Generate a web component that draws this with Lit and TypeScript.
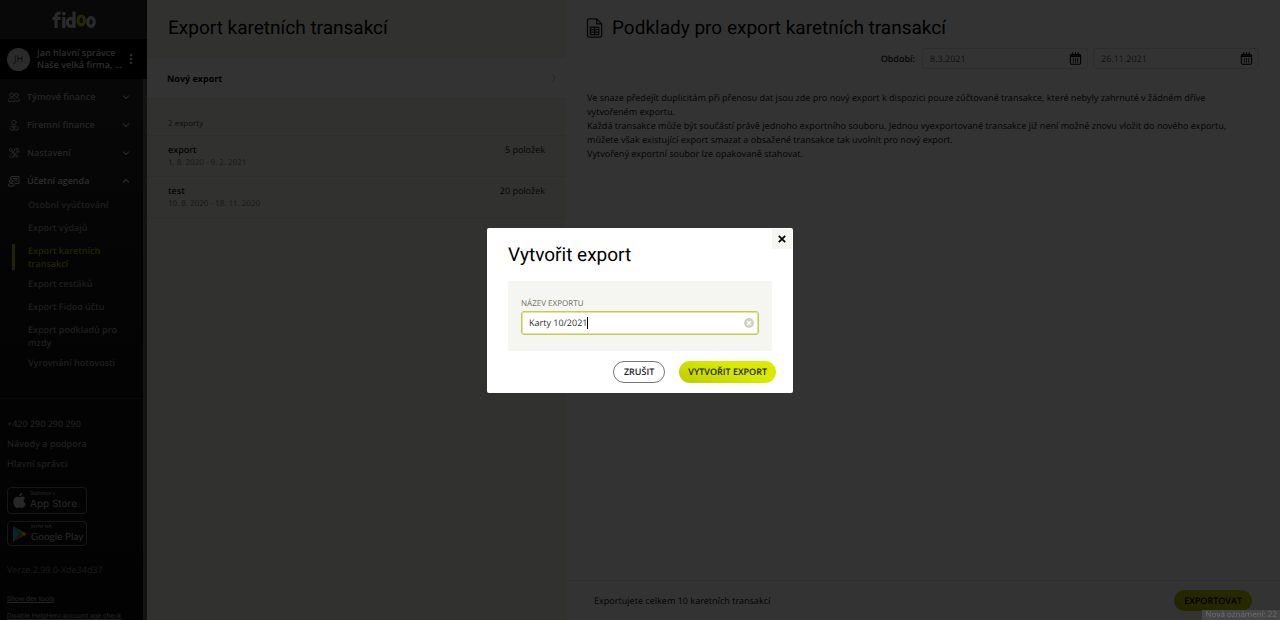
import { LitElement, html, css, svg } from "lit";
import { customElement, property, state } from "lit/decorators.js";
import { classMap } from "lit/directives/class-map.js";

const icon = (body: unknown, size = 12, view = 24) => html`<svg
  class="icon"
  width=${size}
  height=${size}
  viewBox="0 0 ${view} ${view}"
  fill="none"
  stroke="currentColor"
  stroke-width="2"
  stroke-linecap="round"
  stroke-linejoin="round"
  aria-hidden="true"
>
  ${body}
</svg>`;

const people = svg`<circle cx="7.500" cy="8" r="4"/><circle cx="17" cy="8" r="3.500"/><path d="M1 20v-1.500c0-3 2-4.500 4-4.500h5c2 0 4 1.500 4 4.500V20zM16.500 14H19c2.500 0 4 1.800 4 4.500V20h-6"/>`;
const person = svg`<circle cx="12" cy="7" r="4.500"/><path d="M4 21v-2c0-3 2-4.500 4.500-4.500h7c2.500 0 4.500 1.500 4.500 4.500v2zM12 15v5M9 15l3 4 3-4"/>`;
const tools = svg`<path d="M2.500 5l2.500-2.500L8 4.500v2.500l12 11.500-2 2L6.500 8.500H4.500zM14 16l-4.500 5.500M20 3l-3.500 3.500.8 2 2.200.6L22 6c1 4-2 6.500-5.500 5.500L7 21c-2.500 1.500-5-1-3.500-3.500L12.500 8C12 4.500 15.500 1.500 20 3z"/>`;
const agenda = svg`<path d="M6 8V3h16v14h-8M11 7h7v6M18 7l-6 6"/><circle cx="6" cy="12" r="3"/><path d="M1 21.500V20c0-2 1.500-3 3.500-3h4c2 0 3.500 1 3.500 3v1.500z"/>`;
const down = svg`<path d="M4 8.500l8 8 8-8" stroke-width="3.500"/>`;
const up = svg`<path d="M4 15.500l8-8 8 8" stroke-width="3.500"/>`;
const calendar = svg`<rect x="2.500" y="4.500" width="19" height="18" rx="2"/><path d="M3 7.500h18" stroke-width="3"/><path d="M7 1v4M12 1v4M17 1v4"/><path d="M8 12v7M12 12v7M16 12v7" stroke-width="1.600"/>`;
const sheet = svg`<path d="M5 1h9l6 6v14a2 2 0 0 1-2 2H5a2 2 0 0 1-2-2V3a2 2 0 0 1 2-2zM14 1v6h6M6.500 11h10v9h-10zM6.500 14h10M6.500 17h10M11.500 11v9" stroke-width="1.500"/>`;

interface NavGroup {
  label: string;
  glyph: unknown;
  open?: boolean;
}

@customElement("side-nav")
class SideNav extends LitElement {
  static styles = css`
    :host {
      display: flex;
      flex-direction: column;
      min-height: 0;
      overflow: hidden;
      color: #bbb;
      background: linear-gradient(#2c2c2c, #141414 50%, #0d0d0d);
      font-size: 9px;
      font-weight: 600;
    }
    .logo {
      display: flex;
      justify-content: center;
      align-items: center;
      height: 39px;
      flex: none;
      background: #2c2c2c;
    }
    .user {
      display: flex;
      align-items: center;
      gap: 7px;
      height: 40px;
      padding: 0 13px 0 7px;
      flex: none;
      background: #000;
      color: #d8d8d8;
      line-height: 12px;
    }
    .avatar {
      display: grid;
      place-items: center;
      width: 23px;
      height: 23px;
      border-radius: 50%;
      flex: none;
      background: #d0d0d0;
      color: #333;
      font-weight: 400;
    }
    .who {
      flex: 1;
      min-width: 0;
      white-space: nowrap;
    }
    .more,
    .group {
      border: 0;
      padding: 0;
      background: none;
      color: inherit;
      font: inherit;
    }
    .more {
      display: flex;
    }
    .scroll {
      flex: 1;
      border-right: 4px solid #606060;
      padding-top: 4px;
    }
    .group {
      display: flex;
      align-items: center;
      width: 100%;
      height: 28px;
      padding: 0 13px 0 8px;
      gap: 7px;
      color: #b0b0b0;
      text-align: left;
    }
    .group.open {
      color: #d8d8d8;
    }
    .label {
      flex: 1;
    }
    .icon {
      flex: none;
    }
    ul {
      list-style: none;
      margin: 0;
      padding: 0;
    }
    .sub li {
      display: flex;
      min-height: 23px;
      box-sizing: border-box;
      padding: 3px 20px 4px 28px;
      line-height: 13px;
    }
    a {
      color: inherit;
      text-decoration: none;
    }
    .sub {
      padding-bottom: 22px;
      color: #909090;
    }
    .sub .active {
      padding-left: 12px;
      color: #a8b500;
    }
    .active a {
      border-left: 3px solid #a8b500;
      padding-left: 13px;
    }
    .help {
      border-top: 1px solid #303030;
      padding: 15px 7px 0;
      color: #909090;
      line-height: 20px;
    }
    .stores {
      display: flex;
      flex-direction: column;
      align-items: flex-start;
      gap: 7px;
      padding: 13px 7px 0;
    }
    .store {
      display: flex;
      align-items: center;
      gap: 4px;
      box-sizing: border-box;
      width: 80px;
      height: 27px;
      padding-left: 5px;
      border: 1px solid #707070;
      border-radius: 4px;
      color: #c0c0c0;
      font: 10px/13px "Inter", "Open Sans", sans-serif;
      white-space: nowrap;
    }
    .play {
      height: 25px;
      font: 10px/13px "Lato", "Open Sans", sans-serif;
    }
    .store svg {
      flex: none;
    }
    .store small {
      display: block;
      font-size: 5px;
      line-height: 7px;
    }
    .version {
      padding: 14px 7px 0;
      color: #808080;
      font-weight: 400;
      line-height: 20px;
    }
    .dev {
      display: flex;
      flex-direction: column;
      gap: 7px;
      padding: 14px 7px 0;
      color: #b0b0b0;
      font: 7px/10px "Roboto", sans-serif;
      white-space: nowrap;
    }
    .dev a {
      text-decoration: underline;
    }
  `;

  private groups: NavGroup[] = [
    { label: "Týmové finance", glyph: people },
    { label: "Firemní finance", glyph: person },
    { label: "Nastavení", glyph: tools },
    { label: "Účetní agenda", glyph: agenda, open: true },
  ];

  private links = [
    "Osobní vyúčtování",
    "Export výdajů",
    "Export karetních transakcí",
    "Export cesťáků",
    "Export Fidoo účtu",
    "Export podkladů pro mzdy",
    "Vyrovnání hotovosti",
  ];

  render() {
    return html`
      <div class="logo">
        <svg width="44" height="20" viewBox="0 0 44 20" role="img" aria-label="fidoo" fill="none" stroke="#d0d0d0" stroke-width="3.200">
          <path d="M4 18V6.500C4 3.800 5.500 2.900 8.500 3.200M.5 8.300h8M11.800 7v11M11.800 2v3.200" />
          <ellipse cx="18.600" cy="12.400" rx="3.200" ry="4" />
          <path d="M22 1.500V18" />
          <ellipse cx="29.200" cy="10.400" rx="3.200" ry="4.400" stroke="#b8c600" />
          <ellipse cx="39" cy="12" rx="3.200" ry="4.400" />
        </svg>
      </div>
      <div class="user">
        <span class="avatar">JH</span>
        <div class="who">
          <div>Jan hlavní správce</div>
          <div>Naše velká firma, ...</div>
        </div>
        <button class="more" aria-label="Další">
          <svg width="6" height="12" viewBox="0 0 6 12" fill="currentColor">
            <circle cx="3" cy="2" r="1.300" /><circle cx="3" cy="6" r="1.300" /><circle cx="3" cy="10" r="1.300" />
          </svg>
        </button>
      </div>
      <div class="scroll">
        <nav>
          ${this.groups.map(
            (g) => html`<button class=${classMap({ group: true, open: !!g.open })}>
              ${icon(g.glyph)}<span class="label">${g.label}</span>${icon(g.open ? up : down, 8)}
            </button>`
          )}
          <ul class="sub">
            ${this.links.map(
              (l, i) => html`<li class=${classMap({ active: i === 2 })}><a href="#">${l}</a></li>`
            )}
          </ul>
        </nav>
        <ul class="help">
          <li><a href="#">+420 290 290 290</a></li>
          <li><a href="#">Návody a podpora</a></li>
          <li><a href="#">Hlavní správci</a></li>
        </ul>
        <div class="stores">
          <a class="store" href="#">
            <svg width="13" height="16" viewBox="0 0 13 16" fill="currentColor" aria-hidden="true">
              <path d="M9 0c.2 1.800-1.300 3.300-2.900 3.200C6 1.600 7.400.2 9 0zM6.600 4.200c.8 0 1.500-.6 2.700-.6 1.300 0 2.300.6 2.900 1.500-2.300 1.500-1.900 4.700.6 5.700-.6 1.800-2 4.200-3.500 4.200-1 0-1.400-.6-2.600-.6s-1.700.6-2.600.6C2.200 15 .3 11.600.3 8.700c0-3 1.900-5 3.800-5 1.100 0 1.900.5 2.500.5z" />
            </svg>
            <span><small>Stáhnout v</small>App Store</span>
          </a>
          <a class="store play" href="#">
            <svg width="14" height="16" viewBox="0 0 14 16" aria-hidden="true">
              <path d="M0 0v16l7-8z" fill="#20b8e0" /><path d="M0 0l10.500 5.700L7.500 8z" fill="#28c878" />
              <path d="M10.500 5.700L14 8l-3.500 2.300L7.500 8z" fill="#f0c010" /><path d="M0 16l10.500-5.700L7.500 8z" fill="#e84050" />
            </svg>
            <span><small>NYNÍ NA</small>Google Play</span>
          </a>
        </div>
        <div class="version">Verze 2.99.0-Xde34d37</div>
        <div class="dev">
          <a href="#">Show dev tools</a>
          <a href="#">Disable HelpHero account age check</a>
        </div>
      </div>
    `;
  }
}

@customElement("date-field")
class DateField extends LitElement {
  @property() value = "";
  @property() label = "";

  static styles = css`
    :host {
      display: block;
    }
    .field {
      display: flex;
      align-items: center;
      box-sizing: border-box;
      width: 166px;
      height: 21px;
      padding: 0 5px 0 7px;
      border: 1px solid #e0e0da;
      border-radius: 3px;
    }
    input {
      flex: 1;
      min-width: 0;
      border: 0;
      padding: 0;
      outline: 0;
      background: none;
      color: #555;
      font: 9px "Open Sans", sans-serif;
      text-rendering: geometricPrecision;
    }
    button {
      display: flex;
      border: 0;
      padding: 0;
      background: none;
      color: #000;
    }
  `;

  render() {
    return html`<div class="field">
      <input type="text" aria-label=${this.label} .value=${this.value} />
      <button aria-label="Kalendář">${icon(calendar, 13)}</button>
    </div>`;
  }
}

@customElement("export-dialog")
class ExportDialog extends LitElement {
  @state() private name = "Karty 10/2021";

  static styles = css`
    :host {
      position: fixed;
      inset: 0;
      display: grid;
      place-items: center;
      background: rgba(0, 0, 0, 0.8);
    }
    .dialog {
      position: relative;
      box-sizing: border-box;
      width: 306px;
      padding: 13px 21px 10px;
      border-radius: 2px;
      background: #fff;
      color: #111;
    }
    h2 {
      margin: 0 0 13px;
      font: 19px/27px "Roboto", sans-serif;
      color: #000;
    }
    button {
      font: 600 9px "Open Sans", sans-serif;
      text-rendering: geometricPrecision;
    }
    .close {
      position: absolute;
      top: 1px;
      right: 1px;
      display: grid;
      place-items: center;
      width: 20px;
      height: 20px;
      padding: 0;
      border: 0;
      background: #f5f6f1;
      color: #000;
    }
    .panel {
      padding: 16px 13px;
      border-radius: 2px;
      background: #f5f6f1;
    }
    label {
      display: block;
      color: #77756b;
      font: 8px/14px "Noto Sans", "Open Sans", sans-serif;
    }
    .field {
      position: relative;
      display: flex;
      align-items: center;
      box-sizing: border-box;
      height: 24px;
      padding: 0 4px 0 7px;
      border: 1px solid #c3cf4a;
      border-radius: 3px;
      background: #fff;
      box-shadow: inset 0 0 0 1px #e0e79c;
    }
    input {
      flex: 1;
      min-width: 0;
      border: 0;
      padding: 0;
      outline: 0;
      background: none;
      color: #333;
      font: 9px "Open Sans", sans-serif;
      text-rendering: geometricPrecision;
    }
    .caret {
      position: absolute;
      left: 65px;
      top: 5px;
      width: 1px;
      height: 12px;
      background: #000;
    }
    .clear {
      display: flex;
      border: 0;
      padding: 0;
      background: none;
    }
    .actions {
      display: flex;
      justify-content: flex-end;
      gap: 14px;
      margin: 10px -4px 0 0;
    }
    .pill {
      height: 22px;
      padding: 0 10px;
      border: 1px solid #777;
      border-radius: 11px;
      background: #fff;
      color: #222;
    }
    .pill.primary {
      border: 0;
      padding: 0 9px;
      background: linear-gradient(20deg, #bccb00, #d9ea00 60%);
    }
  `;

  render() {
    return html`<div class="dialog" role="dialog" aria-modal="true" aria-labelledby="title">
      <h2 id="title">Vytvořit export</h2>
      <button class="close" aria-label="Zavřít">
        <svg width="8" height="8" viewBox="0 0 8 8" stroke="#000" stroke-width="1.800"><path d="M.8.800l6.400 6.400M7.200.800L.800 7.200" /></svg>
      </button>
      <div class="panel">
        <label for="name">NÁZEV EXPORTU</label>
        <div class="field">
          <input
            id="name"
            type="text"
            .value=${this.name}
            @input=${(e: Event) => (this.name = (e.target as HTMLInputElement).value)}
          />
          <span class="caret"></span>
          <button class="clear" aria-label="Vymazat" @click=${() => (this.name = "")}>
            <svg width="10" height="10" viewBox="0 0 10 10"><circle cx="5" cy="5" r="5" fill="#d0d1c4" /><path d="M3.300 3.300l3.400 3.400M6.700 3.300L3.300 6.700" stroke="#fff" stroke-width="1.500" /></svg>
          </button>
        </div>
      </div>
      <div class="actions">
        <button class="pill">ZRUŠIT</button>
        <button class="pill primary">VYTVOŘIT EXPORT</button>
      </div>
    </div>`;
  }
}

@customElement("app-root")
class AppRoot extends LitElement {
  static styles = css`
    :host {
      display: grid;
      grid-template-columns: 147px minmax(0, 419fr) minmax(0, 714fr);
      grid-template-rows: minmax(0, 1fr);
      height: 100vh;
      overflow: hidden;
      background: #fff;
      color: #222;
      font: 9px/14px "Open Sans", sans-serif;
      text-rendering: geometricPrecision;
    }
    h1 {
      margin: 0;
      color: #000;
      font: 19px/28px "Roboto", sans-serif;
    }
    .list {
      background: #f3f4ee;
    }
    .list h1 {
      padding: 14px 21px 15px;
    }
    .new {
      display: flex;
      align-items: center;
      justify-content: space-between;
      width: 100%;
      height: 42px;
      padding: 0 8px 0 20px;
      border: solid #e8e9e0;
      border-width: 1px 0;
      background: #fff;
      color: #000;
      font: 700 9px "Open Sans", sans-serif;
      text-rendering: geometricPrecision;
    }
    .new svg {
      color: #888;
    }
    .count {
      padding: 18px 21px 4px;
      color: #444;
      font-size: 8px;
    }
    .rows {
      list-style: none;
      margin: 0;
      padding: 0;
      border-bottom: 1px solid #e4e5dc;
    }
    .row {
      display: flex;
      justify-content: space-between;
      height: 41px;
      box-sizing: border-box;
      border-top: 1px solid #e4e5dc;
      padding: 7px 21px 0;
    }
    .name {
      color: #111;
      font-weight: 600;
    }
    .range {
      color: #777;
      font-size: 8px;
      line-height: 12px;
    }
    main {
      display: flex;
      flex-direction: column;
    }
    .title {
      display: flex;
      align-items: center;
      gap: 7px;
      padding: 14px 21px 6px 19px;
    }
    .title svg {
      color: #222;
    }
    .period {
      display: flex;
      align-items: center;
      justify-content: flex-end;
      gap: 5px;
      padding-right: 21px;
    }
    .period b {
      margin-right: 2px;
      font-weight: 600;
    }
    .text {
      flex: 1;
      padding: 22px 28px 0 21px;
      font-family: "Noto Sans", "Open Sans", sans-serif;
    }
    p {
      margin: 0;
    }
    footer {
      display: flex;
      align-items: center;
      justify-content: space-between;
      height: 39px;
      border-top: 1px solid #e8e9e0;
      padding: 0 28px;
      font-family: "Noto Sans", "Open Sans", sans-serif;
    }
    .export {
      height: 21px;
      padding: 0 10px;
      border: 0;
      border-radius: 11px;
      background: linear-gradient(20deg, #a8b500, #c6d600);
      color: #000;
      font: 600 9px "Open Sans", sans-serif;
      text-rendering: geometricPrecision;
    }
    .notice {
      position: fixed;
      right: 0;
      bottom: 0;
      padding: 0 3px 0 4px;
      background: #464646;
      color: #707070;
      line-height: 10px;
      font-size: 8px;
    }
  `;

  private rows = [
    { name: "export", range: "1. 8. 2020 - 9. 2. 2021", items: "5 položek" },
    { name: "test", range: "10. 8. 2020 - 18. 11. 2020", items: "20 položek" },
  ];

  render() {
    return html`
      <side-nav></side-nav>
      <section class="list">
        <h1>Export karetních transakcí</h1>
        <button class="new">Nový export ${icon(svg`<path d="M8 3l8 9-8 9"/>`, 8)}</button>
        <div class="count">2 exporty</div>
        <ul class="rows">
          ${this.rows.map(
            (r) => html`<li class="row">
              <div>
                <div class="name">${r.name}</div>
                <div class="range">${r.range}</div>
              </div>
              <span>${r.items}</span>
            </li>`
          )}
        </ul>
      </section>
      <main>
        <div class="title">${icon(sheet, 20)}<h1>Podklady pro export karetních transakcí</h1></div>
        <div class="period">
          <b>Období:</b>
          <date-field label="Období od" value="8.3.2021"></date-field>
          <date-field label="Období do" value="26.11.2021"></date-field>
        </div>
        <div class="text">
          <p>Ve snaze předejít duplicitám při přenosu dat jsou zde pro nový export k dispozici pouze zúčtované transakce, které nebyly zahrnuté v žádném dříve vytvořeném exportu.</p>
          <p>Každá transakce může být součástí právě jednoho exportního souboru. Jednou vyexportované transakce již není možné znovu vložit do nového exportu, můžete však existující export smazat a obsažené transakce tak uvolnit pro nový export.</p>
          <p>Vytvořený exportní soubor lze opakovaně stahovat.</p>
        </div>
        <footer>
          <span>Exportujete celkem 10 karetních transakcí</span>
          <button class="export">EXPORTOVAT</button>
        </footer>
      </main>
      <export-dialog></export-dialog>
      <div class="notice">Nová oznámení: 22</div>
    `;
  }
}
